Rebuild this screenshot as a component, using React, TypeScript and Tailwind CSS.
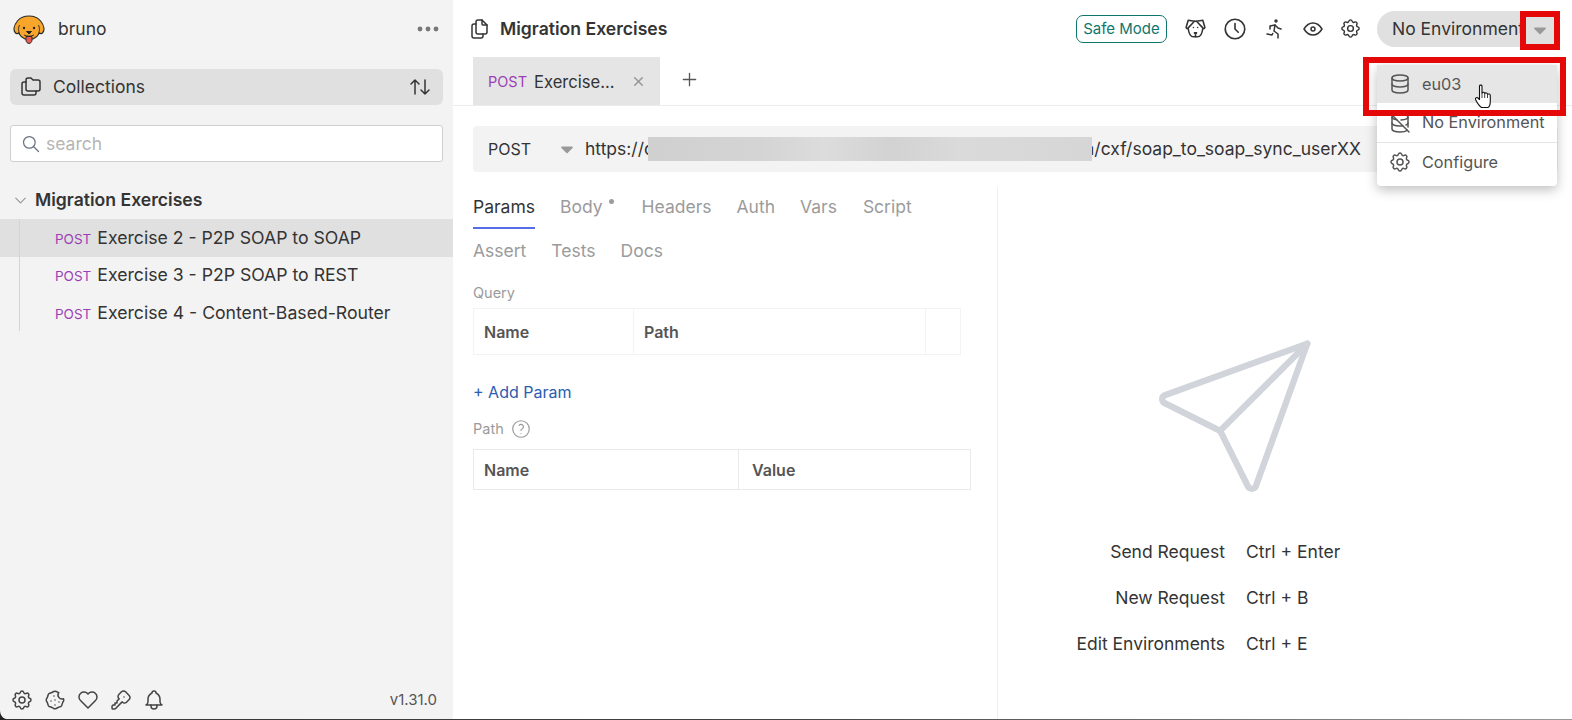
import { TbSettings, TbCookie, TbHeart, TbKey, TbBell, TbSearch, TbChevronDown, TbArrowsSort, TbFolders, TbFiles, TbDog, TbClock, TbRun, TbEye, TbDatabase, TbDatabaseOff, TbX, TbPlus, TbHelp, TbCaretDownFilled } from "react-icons/tb";

function Logo() {
  return (
    <svg width="32" height="30" viewBox="0 0 32 30" className="mt-[2px] shrink-0">
      <path d="M10 2 C13 0.600 19 0.600 22 2 C26 3 30 8 31 13 C31.500 17 28.500 20 26.500 18 C25 21 22 23 20 24 L12 24 C10 23 7 21 5.500 18 C3.500 20 0.500 17 1 13 C2 8 6 3 10 2 Z" fill="#f8a52c" stroke="#2a2a2a" strokeWidth="1.100" />
      <path d="M6.500 10 C5 13 5.500 16 6.500 19 M25.500 10 C27 13 26.500 16 25.500 19" fill="none" stroke="#2a2a2a" strokeWidth="0.900" />
      <circle cx="11" cy="13" r="1.200" fill="#222" />
      <circle cx="21" cy="13" r="1.200" fill="#222" />
      <path d="M13.500 16.500 H18.500 L16 19 Z" fill="#222" stroke="#222" strokeLinejoin="round" />
      <path d="M11 20 C13 21.500 19 21.500 21 20" fill="none" stroke="#222" strokeWidth="0.900" />
      <path d="M13 21.500 H19 V25 C19 29.500 13 29.500 13 25 Z" fill="#ee5d52" stroke="#2a2a2a" strokeWidth="1" />
    </svg>
  );
}

function HandCursor() {
  return (
    <svg width="19" height="25" viewBox="0 0 18 25" className="absolute left-[97px] top-[19px]">
      <path d="M5 2 C5 0.800 7.500 0.800 7.500 2 V9 C8 8 10 8 10.200 9.500 C11 8.500 12.800 8.800 13 10.300 C14 9.600 15.800 10 15.800 11.500 V17 C15.800 20 14.500 23 13.500 23.500 H7 C5.500 22.500 2 17.500 1 15.500 C0.500 13.800 2.500 13 3.500 14 L5 15.500 Z" fill="#fff" stroke="#111" strokeWidth="1.100" strokeLinejoin="round" />
      <path d="M7.500 9 V14 M10.200 9.500 V14 M13 10.300 V14" stroke="#111" strokeWidth="0.800" />
    </svg>
  );
}

function Row({ label, keys }: { label: string; keys: string }) {
  return (
    <div className="flex h-[46px] items-center">
      <div className="w-[235px] text-right">{label}</div>
      <div className="ml-[21px]">{keys}</div>
    </div>
  );
}

function TreeItem({ name, active }: { name: string; active?: boolean }) {
  return (
    <div className={`flex h-[37.500px] items-center pl-[55px] ${active ? "bg-[#e0e0e0]" : ""}`}>
      <span className="mr-[6px] mt-[2px] text-[13.500px] text-[#9c3fb5]">POST</span>
      <span className="text-[17.650px]">{name}</span>
    </div>
  );
}

export default function App() {
  const font = { fontFamily: "Inter, 'Liberation Sans', sans-serif" };
  return (
    <div style={font} className="relative flex h-[720px] w-[1572px] overflow-hidden bg-white text-[17.500px] text-[#343434]">
      <aside className="flex w-[453px] shrink-0 flex-col bg-[#f3f3f3]">
        <div className="flex h-[57px] items-center pl-[13px] pr-[14px]">
          <Logo />
          <span className="ml-[13px] pt-[2px] text-[17.500px]">bruno</span>
          <svg width="22" height="6" viewBox="0 0 22 6" className="ml-auto" fill="#777">
            <circle cx="3" cy="3" r="2.400" />
            <circle cx="11" cy="3" r="2.400" />
            <circle cx="19" cy="3" r="2.400" />
          </svg>
        </div>
        <div className="mx-[10px] mt-[12px] flex h-[36px] items-center rounded-[6px] bg-[#e0e0e0] pl-[9px] pr-[11px]">
          <TbFolders className="h-[24px] w-[24px]" strokeWidth={1.500} />
          <span className="ml-[10px] pt-[1px]">Collections</span>
          <TbArrowsSort className="ml-auto h-[24px] w-[24px]" strokeWidth={1.500} />
        </div>
        <div className="mx-[10px] mt-[20px] flex h-[37px] items-center rounded-[3px] border border-[#cfcfcf] bg-white pl-[10px]">
          <TbSearch className="h-[20px] w-[20px] text-[#6b7280]" strokeWidth={1.500} />
          <span className="ml-[5px] pt-[2px] text-[#b5b5b5]">search</span>
        </div>
        <div className="mt-[19px] flex h-[38px] items-center pl-[11px]">
          <TbChevronDown className="h-[19px] w-[19px] text-[#999]" strokeWidth={1.500} />
          <span className="ml-[5px] text-[17.600px] font-semibold">Migration Exercises</span>
        </div>
        <div className="relative">
          <TreeItem name="Exercise 2 - P2P SOAP to SOAP" active />
          <TreeItem name="Exercise 3 - P2P SOAP to REST" />
          <TreeItem name="Exercise 4 - Content-Based-Router" />
          <div className="absolute left-[19px] top-0 h-[112px] w-px bg-[#d4d4d4]" />
        </div>
        <div className="mt-auto flex h-[40px] items-center gap-[9px] pl-[10px] pr-[16px] text-[#444]">
          <TbSettings className="h-[24px] w-[24px]" strokeWidth={1.500} />
          <TbCookie className="h-[24px] w-[24px]" strokeWidth={1.500} />
          <TbHeart className="h-[24px] w-[24px]" strokeWidth={1.500} />
          <TbKey className="h-[24px] w-[24px]" strokeWidth={1.500} />
          <TbBell className="h-[24px] w-[24px]" strokeWidth={1.500} />
          <span className="ml-auto text-[15px] text-[#555]">v1.31.0</span>
        </div>
      </aside>

      <main className="flex min-w-0 flex-1 flex-col">
        <div className="flex h-[57px] items-center pl-[14px] pr-[14px]">
          <TbFiles className="h-[24px] w-[24px]" strokeWidth={1.500} />
          <span className="ml-[9px] pt-[2px] text-[17.600px] font-semibold">Migration Exercises</span>
          <div className="ml-auto flex h-[28px] w-[91px] items-center justify-center rounded-[7px] border border-[#0f766e] pt-[1px] text-[15px] text-[#0f766e]">Safe Mode</div>
          <TbDog className="ml-[16px] h-[25px] w-[25px]" strokeWidth={1.500} />
          <TbClock className="ml-[14px] h-[26px] w-[26px]" strokeWidth={1.500} />
          <TbRun className="ml-[15px] h-[24px] w-[24px]" strokeWidth={1.500} />
          <TbEye className="ml-[14px] h-[24px] w-[24px]" strokeWidth={1.500} />
          <TbSettings className="ml-[14px] h-[23px] w-[23px]" strokeWidth={1.500} />
          <div className="ml-[15px] flex h-[36px] w-[181px] items-center overflow-hidden whitespace-nowrap rounded-full bg-[#e0e0e0] pl-[15px]">
            <span className="pt-[2px]">No Environment</span>
          </div>
        </div>
        <div className="flex h-[49px] items-stretch border-b border-[#ececec] pl-[20px]">
          <div className="flex h-[48px] w-[187px] items-center bg-[#e5e5e5] pl-[15px]">
            <span className="mr-[7px] pt-[2px] text-[14.500px] text-[#9c3fb5]">POST</span>
            <span className="pt-[2px] text-[16.600px]">Exercise...</span>
            <TbX className="ml-[16px] h-[15px] w-[15px] text-[#999]" strokeWidth={2.500} />
          </div>
          <div className="ml-[19px] flex items-center pb-[3px]">
            <TbPlus className="h-[21px] w-[21px] text-[#555]" strokeWidth={1.500} />
          </div>
        </div>
        <div className="ml-[20px] mr-[14px] mt-[20px] flex h-[46px] items-center rounded-[4px] bg-[#f3f3f3] pl-[15px]">
          <span className="w-[69px] text-[16px]">POST</span>
          <TbCaretDownFilled className="h-[20px] w-[20px] text-[#999]" />
          <span className="ml-[8px] w-[63px] whitespace-nowrap">https://c</span>
          <div className="relative z-10 h-[24px] w-[444px] bg-[linear-gradient(90deg,#d0d0d0_0%,#d4d4d4_25%,#dcdcdc_40%,#d2d2d2_55%,#dadada_70%,#d6d6d6_100%)]" />
          <span className="ml-[-7.500px] whitespace-nowrap">a/cxf/soap_to_soap_sync_userXX</span>
        </div>
        <div className="flex min-h-0 flex-1 pl-[20px] pt-[15px]">
          <div className="w-[525px] shrink-0 border-r border-[#eeeeee]">
            <div className="flex h-[40px] items-center gap-[25px] text-[#9b9b9b]">
              <div className="relative text-[#343434]">Params<div className="absolute left-0 top-[33px] h-[2px] w-[62px] bg-[#546de5]" /></div>
              <div className="mr-[3px] flex">Body<span className="ml-[6px] mt-[5px] h-[5px] w-[5px] rounded-full bg-[#9b9b9b]" /></div>
              <div>Headers</div>
              <div>Auth</div>
              <div>Vars</div>
              <div className="ml-[1px]">Script</div>
            </div>
            <div className="flex h-[48px] items-center gap-[25px] text-[#9b9b9b]">
              <div>Assert</div>
              <div>Tests</div>
              <div>Docs</div>
            </div>
            <div className="mt-[7px] h-[21px] text-[14.500px] leading-[21px] text-[#9b9b9b]">Query</div>
            <div className="mt-[5px] flex h-[47px] w-[488px] border border-[#f3f3f3] text-[16px] font-semibold text-[#555]">
              <div className="flex w-[160px] items-center border-r border-[#f3f3f3] pl-[10px]">Name</div>
              <div className="flex w-[292px] items-center border-r border-[#f3f3f3] pl-[10px]">Path</div>
            </div>
            <div className="mt-[25px] h-[24px] text-[16px] leading-[24px] text-[#2a5db0]">+ Add Param</div>
            <div className="mt-[13px] flex h-[24px] items-center text-[14.500px] text-[#9b9b9b]">
              Path
              <TbHelp className="ml-[6px] h-[22px] w-[22px]" strokeWidth={1.300} />
            </div>
            <div className="mt-[8px] flex h-[41px] w-[498px] border border-[#eaeaea] text-[16px] font-semibold text-[#555]">
              <div className="flex w-[265px] items-center border-r border-[#eaeaea] pl-[10px]">Name</div>
              <div className="flex items-center pl-[13px]">Value</div>
            </div>
          </div>
          <div className="flex-1">
            <svg width="190" height="190" viewBox="0 0 24 24" fill="none" stroke="#d1d5db" strokeWidth="0.800" strokeLinecap="round" strokeLinejoin="round" className="ml-[143px] mt-[133px]">
              <path d="M10 14l11 -11" />
              <path d="M21 3l-6.500 18a.55 .55 0 0 1 -1 0l-3.500 -7l-7 -3.500a.55 .55 0 0 1 0 -1l18 -6.500" />
            </svg>
            <div className="mt-[19px] -ml-[8px]">
              <Row label="Send Request" keys="Ctrl + Enter" />
              <Row label="New Request" keys="Ctrl + B" />
              <Row label="Edit Environments" keys="Ctrl + E" />
            </div>
          </div>
        </div>
      </main>

      <div className="absolute left-[1377px] top-[65px] z-10 w-[180px] rounded-[4px] bg-white text-[16.250px] text-[#555] shadow-[0_4px_12px_rgba(0,0,0,0.25)]">
        <div className="relative flex h-[38px] items-center bg-[#e6e6e6] pl-[11px]">
          <TbDatabase className="h-[24px] w-[24px] text-[#555]" strokeWidth={1.500} />
          <span className="ml-[10px]">eu03</span>
          <HandCursor />
        </div>
        <div className="flex h-[40px] items-center border-b border-[#e5e5e5] pl-[11px]">
          <TbDatabaseOff className="h-[24px] w-[24px]" strokeWidth={1.500} />
          <span className="ml-[10px] pb-[1px]">No Environment</span>
        </div>
        <div className="flex h-[43px] items-center pb-[5px] pl-[11px]">
          <TbSettings className="h-[24px] w-[24px]" strokeWidth={1.500} />
          <span className="ml-[10px]">Configure</span>
        </div>
      </div>

      <div className="absolute left-[1520px] top-[11px] z-20 flex h-[39px] w-[40px] items-center justify-center border-[6px] border-[#e40808] bg-[#e0e0e0]">
        <TbCaretDownFilled className="mb-[2px] h-[20px] w-[20px] text-[#999]" />
      </div>
      <div className="absolute left-[1363px] top-[57px] z-20 h-[59px] w-[203px] border-[6px] border-[#e40808]" />
      <div className="absolute bottom-0 left-0 right-0 h-px bg-[linear-gradient(90deg,#333_0%,#444_50%,#999_100%)]" />
      <svg width="6" height="10" viewBox="0 0 6 10" className="absolute bottom-0 left-0" fill="#222">
        <path d="M0 0 C0 5 2.500 8 6 9 L6 10 L0 10 Z" />
      </svg>
    </div>
  );
}
